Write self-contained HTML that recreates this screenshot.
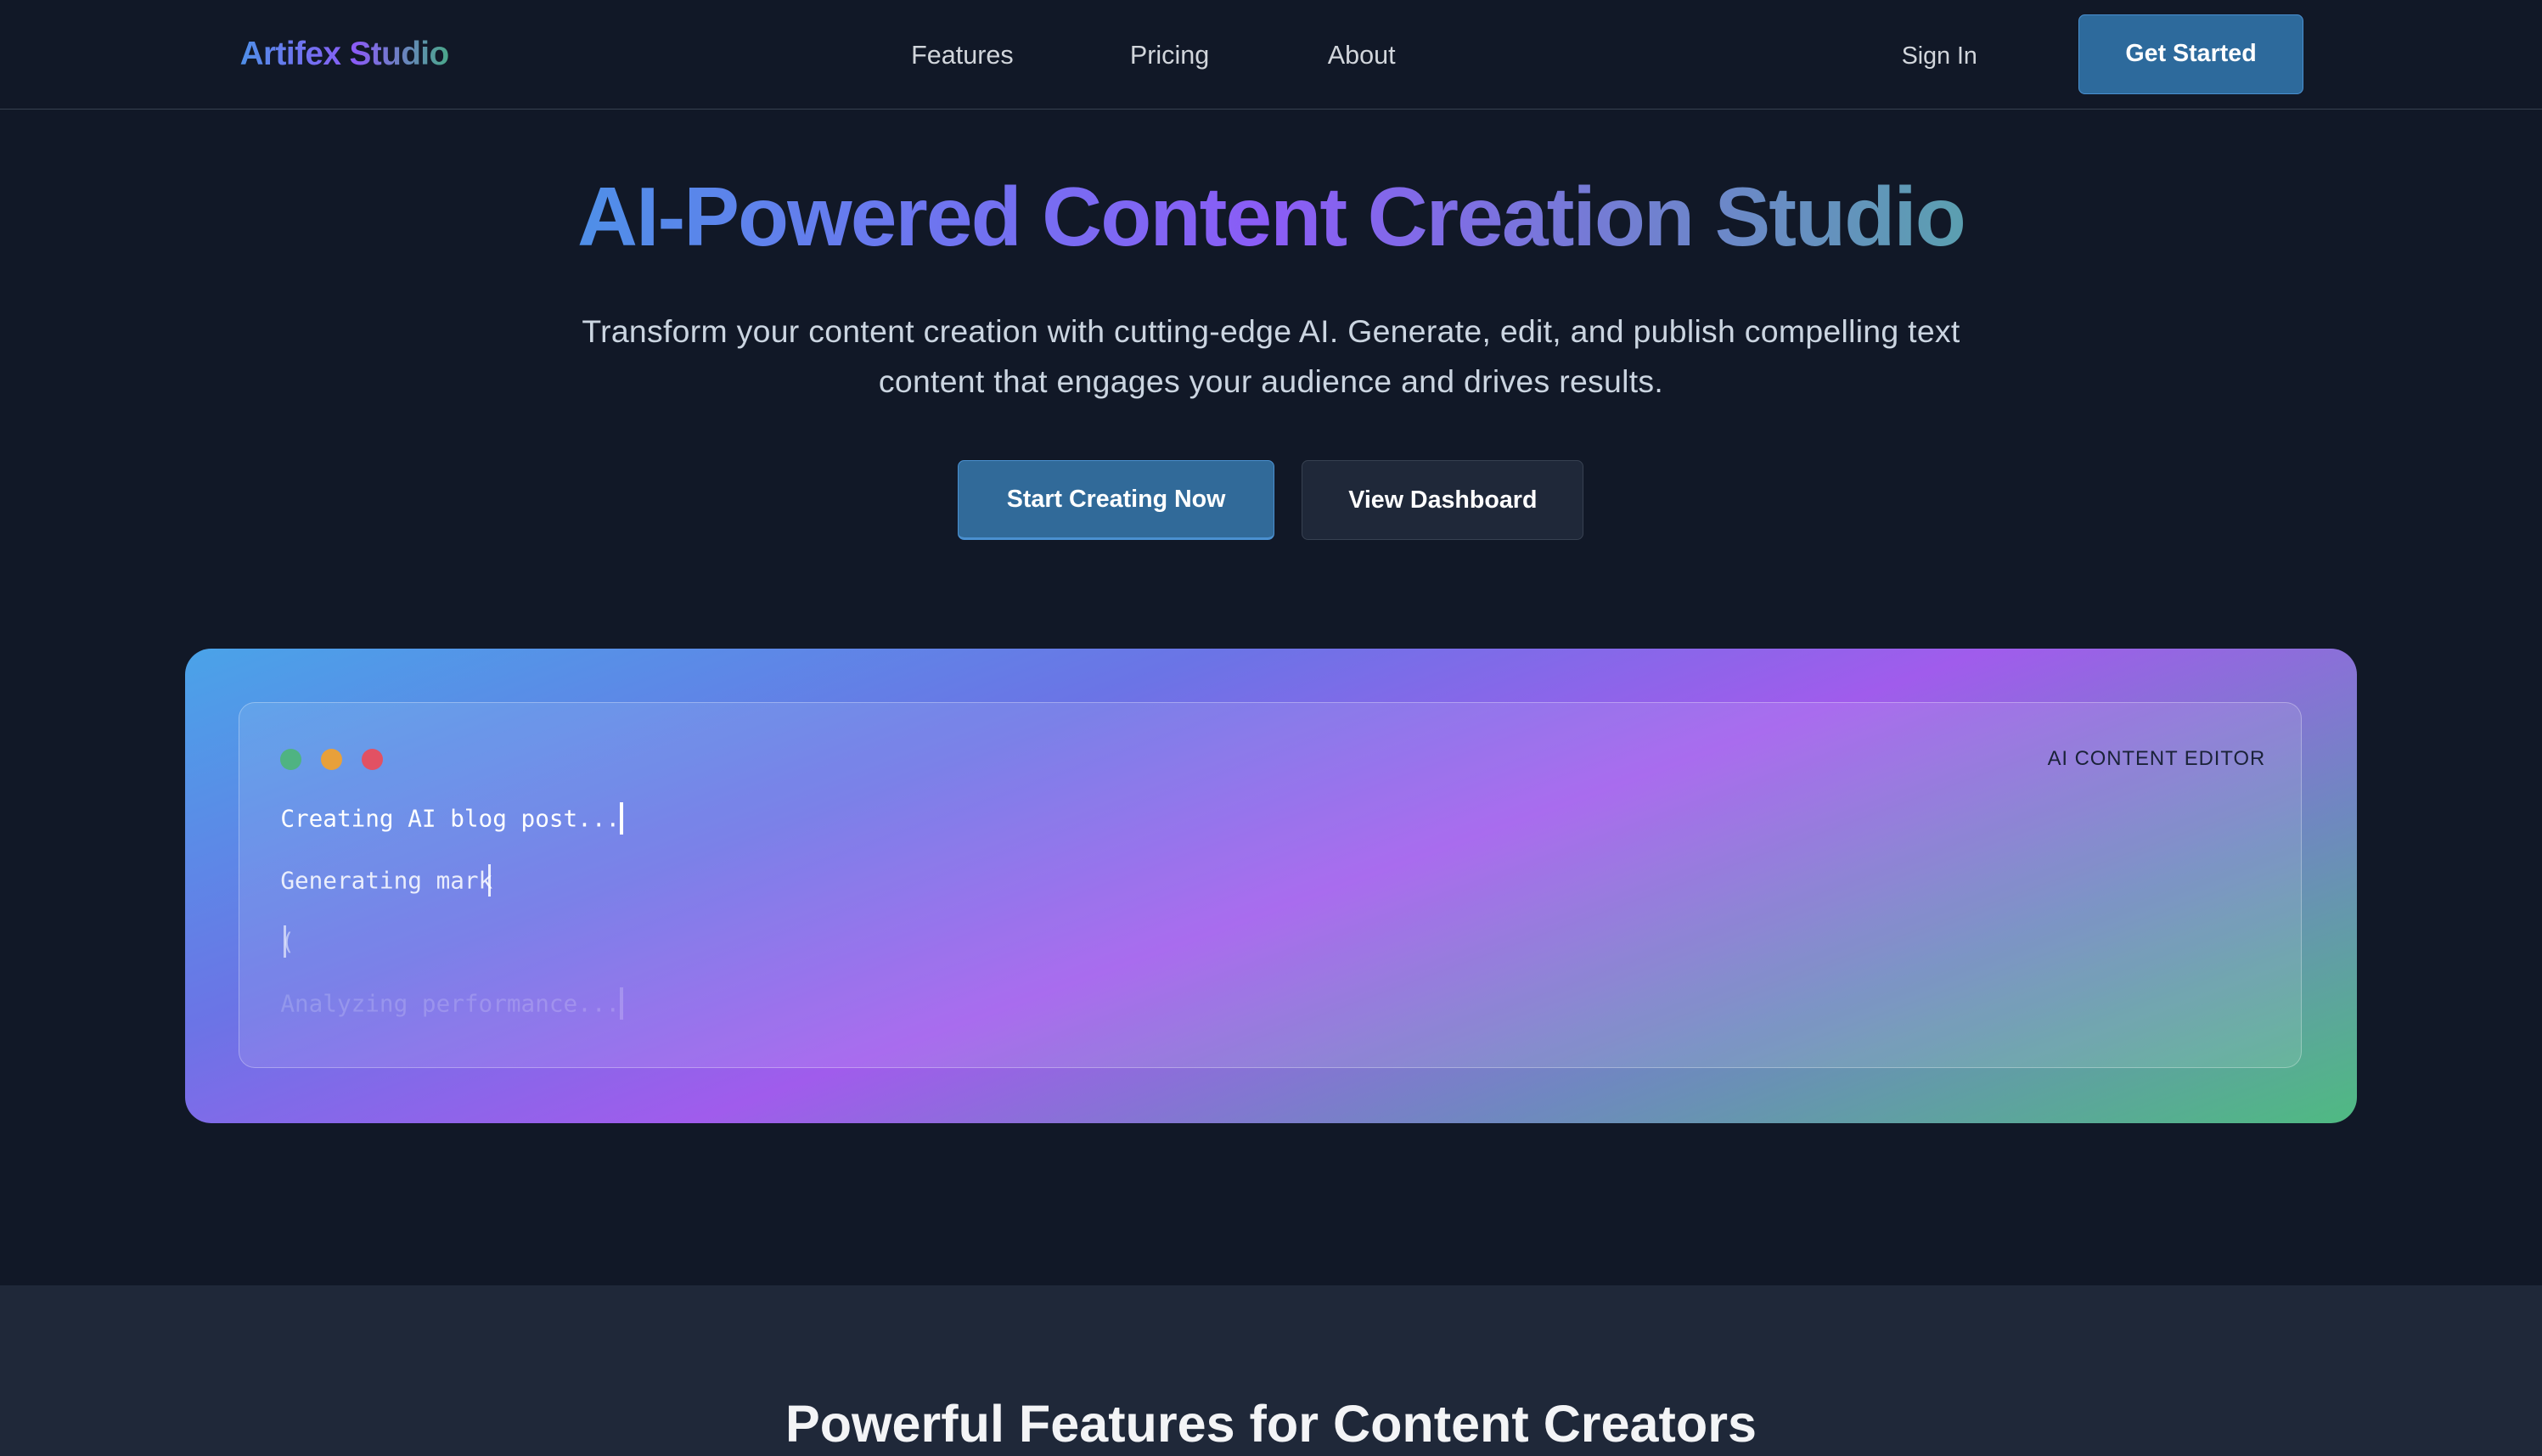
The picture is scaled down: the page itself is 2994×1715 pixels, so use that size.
<!DOCTYPE html>
<html><head><meta charset="utf-8"><style>
html,body{margin:0;padding:0;}
body{width:1568px;height:898px;overflow:hidden;background:#111827;font-family:"Liberation Sans",sans-serif;zoom:1.9094;position:relative;}
.abs{position:absolute;white-space:nowrap;}
.nav{left:0;top:0;width:1568px;height:67px;border-bottom:1px solid #374151;}
.logo{left:148px;top:22px;font-size:20.3px;font-weight:bold;background:linear-gradient(90deg,#4f8fe8,#8b5cf6 55%,#4aa88a);-webkit-background-clip:text;color:transparent;letter-spacing:-0.3px}
.nl{top:25px;font-size:16px;color:#d1d5db}
.btn{border-radius:4px;color:#fff;font-weight:bold;font-size:15px;display:flex;align-items:center;justify-content:center;box-sizing:border-box}
.title{left:0;width:1568px;top:104px;text-align:center;font-size:51.5px;font-weight:bold;letter-spacing:-1px}
.title span{background:linear-gradient(90deg,#4f8fe8,#8b5cf6 50%,#5b9fb0);-webkit-background-clip:text;color:transparent}
.sub{left:0;width:1568px;top:189px;text-align:center;font-size:19.6px;letter-spacing:0.15px;line-height:31px;color:#cbd5e1;white-space:normal}
.card{left:114px;top:400px;width:1340px;height:293px;border-radius:16px;background:linear-gradient(160deg,#4aa3e8 0%,#6b74e6 30%,#a05cec 52%,#6f88c0 75%,#4fba82 100%)}
.inner{left:147px;top:433px;width:1273px;height:226px;border-radius:10px;border:1px solid rgba(255,255,255,.3);background:rgba(255,255,255,.1);box-sizing:border-box}
.dot{width:13px;height:13px;border-radius:50%;top:462px}
.mono{font-family:"DejaVu Sans Mono","Liberation Mono",monospace;font-size:14.5px;left:173px;color:#fff}
.cur{display:inline-block;width:2px;height:20px;background:#fff;vertical-align:-5px}
</style></head><body>
<div class="abs nav"></div>
<div class="abs logo">Artifex Studio</div>
<div class="abs nl" style="left:562px">Features</div>
<div class="abs nl" style="left:697px">Pricing</div>
<div class="abs nl" style="left:819px">About</div>
<div class="abs nl" style="left:1173px;top:26px;font-size:15px">Sign In</div>
<div class="abs btn" style="left:1282px;top:9px;width:139px;height:49px;background:#2d6a9c;border:1px solid #4a90d0">Get Started</div>
<div class="abs title"><span>AI-Powered Content Creation Studio</span></div>
<div class="abs sub">Transform your content creation with cutting-edge AI. Generate, edit, and publish compelling text<br>content that engages your audience and drives results.</div>
<div class="abs btn" style="left:591px;top:284px;width:195px;height:49px;background:#316a99;border:1px solid #4a90d0;border-bottom:2px solid #4a90d0">Start Creating Now</div>
<div class="abs btn" style="left:803px;top:284px;width:174px;height:49px;background:#1f2839;border:1px solid #374151">View Dashboard</div>
<div class="abs card"></div>
<div class="abs inner"></div>
<div class="abs dot" style="left:173px;background:#4fb382"></div>
<div class="abs dot" style="left:198px;background:#e8a03a"></div>
<div class="abs dot" style="left:223px;background:#e25163"></div>
<div class="abs" style="left:1263px;top:461px;font-size:12.5px;color:#1a2238;letter-spacing:.5px">AI CONTENT EDITOR</div>
<div class="abs mono" style="top:495px">Creating AI blog post...<span class="cur"></span></div>
<div class="abs mono" style="top:533px;color:rgba(255,255,255,.85)">Generating mark<span class="cur" style="margin-left:-3px;opacity:.85"></span></div>
<div class="abs mono" style="top:571px;color:rgba(255,255,255,.5)">(<span class="cur" style="margin-left:-7px;opacity:.6"></span></div>
<div class="abs mono" style="top:609px;color:rgba(255,255,255,.18)">Analyzing performance...<span class="cur" style="opacity:.2"></span></div>
<div class="abs" style="left:0;top:793px;width:1568px;height:105px;background:#1f2839"></div>
<div class="abs" style="left:0;width:1568px;top:860px;text-align:center;font-size:32px;font-weight:bold;color:#f3f4f6">Powerful Features for Content Creators</div>
</body></html>
